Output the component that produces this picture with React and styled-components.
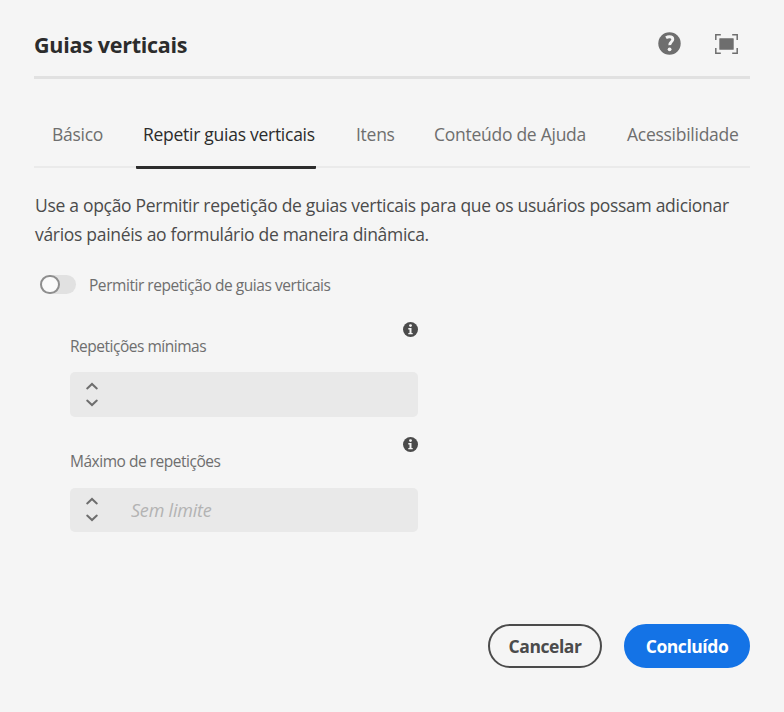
import React, { useState } from 'react';
import styled, { createGlobalStyle } from 'styled-components';

const GlobalStyle = createGlobalStyle`
  * { box-sizing: border-box; }
  body {
    margin: 0;
    background: #f5f5f5;
    font-family: "Open Sans", "Noto Sans", sans-serif;
  }
  button, input { font: inherit; }
`;

const Dialog = styled.main`
  display: flex;
  flex-direction: column;
  width: 784px;
  height: 712px;
  padding: 0 34px 44px;
  background: #f5f5f5;
`;

const Header = styled.header`
  display: flex;
  align-items: center;
  justify-content: space-between;
  flex: none;
  height: 79px;
  padding: 11px 12px 0 0;
  border-bottom: 3px solid #e1e1e1;
`;

const Title = styled.h1`
  margin: 2px 0 0;
  font-size: 21.5px;
  line-height: 30px;
  font-weight: 700;
  letter-spacing: -0.28px;
  color: #2c2c2c;
`;

const HeaderActions = styled.div`
  display: flex;
  align-items: center;
  gap: 34px;
`;

const IconButton = styled.button`
  display: flex;
  padding: 0;
  border: 0;
  background: none;
  color: #6e6e6e;
`;

const TabList = styled.div`
  display: flex;
  flex: none;
  height: 89px;
  padding-left: 11px;
  border-bottom: 2px solid #eaeaea;
`;

const Tab = styled.button`
  flex: none;
  width: ${(p) => p.$width}px;
  height: 90px;
  margin-right: 33px;
  padding: 22px 0 0 7px;
  border: 0;
  border-bottom: 3px solid ${(p) => (p.$active ? '#2c2c2c' : 'transparent')};
  border-radius: 1px;
  background: none;
  color: ${(p) => (p.$active ? '#2c2c2c' : '#6e6e6e')};
  font-size: 17.5px;
  line-height: 24px;
  letter-spacing: -0.27px;
  text-align: left;
  white-space: nowrap;
`;

const Intro = styled.p`
  margin: 23px 0 0 1px;
  font-size: 17.5px;
  line-height: 29px;
  letter-spacing: -0.3px;
  color: #4b4b4b;
  white-space: nowrap;
`;

const ToggleRow = styled.label`
  display: flex;
  align-items: center;
  gap: 13px;
  height: 21px;
  margin: 25px 0 0 6px;
  font-size: 15.5px;
  letter-spacing: -0.45px;
  color: #6e6e6e;
`;

const Track = styled.span`
  width: 36px;
  height: 19px;
  border-radius: 10px;
  background: #e1e1e1;
`;

const Knob = styled.span`
  display: block;
  width: 20px;
  height: 19px;
  border: 2px solid #8e8e8e;
  border-radius: 10px;
  background: #fafafa;
`;

const Fields = styled.div`
  display: flex;
  flex-direction: column;
  gap: 20px;
  width: 348px;
  margin: 27px 0 0 36px;
`;

const Field = styled.div`
  display: flex;
  flex-direction: column;
`;

const InfoLine = styled.div`
  display: flex;
  justify-content: flex-end;
  height: 13px;
  color: #4b4b4b;
`;

const FieldLabel = styled.span`
  height: ${(p) => p.$height}px;
  margin-bottom: 15px;
  font-size: 15.5px;
  line-height: 22px;
  letter-spacing: -0.48px;
  color: #6e6e6e;
`;

const NumberInput = styled.div`
  display: flex;
  align-items: flex-start;
  height: ${(p) => p.$height}px;
  padding: ${(p) => p.$height - 34}px 0 0 15px;
  border-radius: 5px;
  background: #e9e9e9;
`;

const Stepper = styled.div`
  display: flex;
  flex-direction: column;
  gap: 9px;
  margin-top: -1px;
  color: #6e6e6e;
`;

const Input = styled.input`
  flex: 1;
  min-width: 0;
  height: 24px;
  margin-left: 32px;
  padding: 0;
  border: 0;
  outline: 0;
  background: none;
  font-size: 18px;
  line-height: 24px;
  letter-spacing: -0.2px;
  &::placeholder {
    color: #b3b3b3;
    font-style: italic;
    opacity: 1;
  }
`;

const Footer = styled.footer`
  display: flex;
  justify-content: flex-end;
  gap: 22px;
  margin-top: auto;
`;

const Button = styled.button`
  width: ${(p) => p.$width}px;
  height: 44px;
  padding: 0 0 1px;
  border: 2px solid ${(p) => (p.$primary ? '#1473e6' : '#4b4b4b')};
  border-radius: 22px;
  background: ${(p) => (p.$primary ? '#1473e6' : 'transparent')};
  color: ${(p) => (p.$primary ? '#fff' : '#4b4b4b')};
  font-size: 17.5px;
  font-weight: 700;
  letter-spacing: -0.45px;
`;

const HelpIcon = () => (
  <svg width="23" height="23" viewBox="0 0 23 23">
    <circle cx="11.5" cy="11.5" r="11.2" fill="currentColor" />
    <path d="M8 5.7q1.6-1 3.4-1c2.2 0 3.4 1 3.4 2.6 0 1.4-.8 2.1-1.8 3-.9.8-1.3 1.5-1.2 2.9" fill="none" stroke="#f5f5f5" strokeWidth="2.9" />
    <circle cx="11.6" cy="17.3" r="1.9" fill="#f5f5f5" />
  </svg>
);

const FullscreenIcon = () => (
  <svg width="23" height="20" viewBox="0 0 23 20">
    <path d="M.8 6V.8h5M17.2.8h5V6M22.2 14v5.2h-5M5.8 19.2h-5V14" fill="none" stroke="currentColor" strokeWidth="1.5" />
    <rect x="4.3" y="4.2" width="14.4" height="11.6" rx=".6" fill="currentColor" />
  </svg>
);

const InfoIcon = () => (
  <svg width="15" height="15" viewBox="0 0 15 15">
    <circle cx="7.5" cy="7.5" r="7.5" fill="currentColor" />
    <circle cx="7.5" cy="3.6" r="1.4" fill="#f5f5f5" />
    <path d="M5.3 6.1h3.2v4.8h1.2v1.3H5.3v-1.3h1.2V7.4H5.3z" fill="#f5f5f5" />
  </svg>
);

const Chevron = ({ d }) => (
  <svg width="14" height="8" viewBox="0 0 14 8">
    <path d={d} fill="none" stroke="currentColor" strokeWidth="2" strokeLinecap="round" />
  </svg>
);

const TABS = [
  ['Básico', 58],
  ['Repetir guias verticais', 180],
  ['Itens', 45],
  ['Conteúdo de Ajuda', 160],
  ['Acessibilidade', 120],
];

function NumberField({ label, placeholder, labelHeight, height }) {
  return (
    <Field>
      <InfoLine><InfoIcon /></InfoLine>
      <FieldLabel $height={labelHeight}>{label}</FieldLabel>
      <NumberInput $height={height}>
        <Stepper>
          <Chevron d="M2.2 6.4 7 1.9l4.8 4.5" />
          <Chevron d="M2.2 1.6 7 6.1l4.8-4.5" />
        </Stepper>
        <Input placeholder={placeholder} aria-label={label} />
      </NumberInput>
    </Field>
  );
}

export default function App() {
  const [active, setActive] = useState(1);
  return (
    <Dialog>
      <GlobalStyle />
      <Header>
        <Title>Guias verticais</Title>
        <HeaderActions>
          <IconButton aria-label="Ajuda"><HelpIcon /></IconButton>
          <IconButton aria-label="Tela cheia"><FullscreenIcon /></IconButton>
        </HeaderActions>
      </Header>
      <TabList>
        {TABS.map(([name, width], i) => (
          <Tab key={name} $width={width} $active={i === active} onClick={() => setActive(i)}>
            {name}
          </Tab>
        ))}
      </TabList>
      <Intro>
        Use a opção Permitir repetição de guias verticais para que os usuários possam adicionar
        <br />
        vários painéis ao formulário de maneira dinâmica.
      </Intro>
      <ToggleRow>
        <Track><Knob /></Track>
        Permitir repetição de guias verticais
      </ToggleRow>
      <Fields>
        <NumberField label="Repetições mínimas" labelHeight={22} height={45} />
        <NumberField label="Máximo de repetições" placeholder="Sem limite" labelHeight={23} height={44} />
      </Fields>
      <Footer>
        <Button $width={114}>Cancelar</Button>
        <Button $width={126} $primary>Concluído</Button>
      </Footer>
    </Dialog>
  );
}
